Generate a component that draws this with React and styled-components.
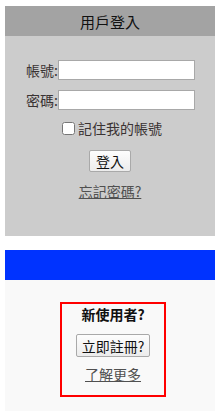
import React from 'react';
import styled, { createGlobalStyle } from 'styled-components';

const GlobalStyle = createGlobalStyle`
	body {
		margin: 0;
		background: #ffffff;
		font-family: "Noto Sans CJK TC", "Noto Sans", sans-serif;
	}
`;

const Page = styled.div`
	padding: 6px 4px 0 5px;
`;

const Header = styled.div`
	height: 30px;
	background: #a3a3a3;
	color: #111;
	font-size: 15px;
	font-weight: normal;
	display: flex;
	align-items: center;
	justify-content: center;
`;

const Panel = styled.div`
	background: #cccccc;
	padding: 24px 0 37px;
	display: flex;
	flex-direction: column;
	align-items: center;
`;

const FieldGrid = styled.div`
	align-self: stretch;
	display: grid;
	grid-template-columns: 53px 137px;
	row-gap: 10px;
	align-items: center;
`;

const Label = styled.label`
	text-align: right;
	font-size: 14px;
	line-height: 20px;
	color: #3a3333;
`;

const Input = styled.input`
	box-sizing: border-box;
	width: 137px;
	height: 20px;
	margin: 0;
	border: 1px solid #a8a8a8;
	background: #ffffff;
	padding: 0 3px;
	font-size: 13px;
`;

const CheckRow = styled.label`
	align-self: flex-start;
	display: flex;
	align-items: center;
	gap: 3px;
	height: 22px;
	margin: 7px 0 0 57px;
	font-size: 14px;
	color: #3a3333;
`;

const Check = styled.input`
	width: 13px;
	height: 13px;
	margin: 0;
`;

const Button = styled.button`
	box-sizing: border-box;
	height: ${p => p.$h || 22}px;
	padding: 0 ${p => p.$px || 6}px;
	margin-top: ${p => p.$mt || 0}px;
	border: 1px solid #a9a9a9;
	border-radius: 2px;
	background: linear-gradient(#fdfdfd, #ececec);
	font-family: inherit;
	font-size: 14px;
	line-height: 1;
	color: #111;
`;

const TextLink = styled.a`
	display: block;
	margin-top: ${p => p.$mt}px;
	font-size: 14px;
	line-height: 16px;
	color: #505050;
	text-decoration: underline;
	text-align: center;
`;

const Spacer = styled.div`
	height: 14px;
`;

const BlueBar = styled.div`
	height: 30px;
	background: #0033ff;
`;

const Lower = styled.div`
	background: #f9f9f9;
	padding: 22px 0 20px;
`;

const SignupBox = styled.div`
	box-sizing: border-box;
	width: 106px;
	height: 95px;
	margin-left: 55px;
	border: 2px solid #ff0000;
	display: flex;
	flex-direction: column;
	align-items: center;
	padding-top: 2px;
`;

const BoxTitle = styled.div`
	font-size: 14px;
	font-weight: bold;
	line-height: 16px;
	color: #111;
`;

export default function App() {
	return (
		<>
			<GlobalStyle />
			<Page>
				<Header>用戶登入</Header>
				<Panel>
					<FieldGrid>
						<Label>帳號:</Label>
						<Input type="text" />
						<Label>密碼:</Label>
						<Input type="password" />
					</FieldGrid>
					<CheckRow>
						<Check type="checkbox" />
						記住我的帳號
					</CheckRow>
					<Button $mt={11}>登入</Button>
					<TextLink $mt={11}>忘記密碼?</TextLink>
				</Panel>
				<Spacer />
				<BlueBar />
				<Lower>
					<SignupBox>
						<BoxTitle>新使用者?</BoxTitle>
						<Button $mt={12} $h={23} $px={5}>立即註冊?</Button>
						<TextLink $mt={9}>了解更多</TextLink>
					</SignupBox>
				</Lower>
			</Page>
		</>
	);
}
